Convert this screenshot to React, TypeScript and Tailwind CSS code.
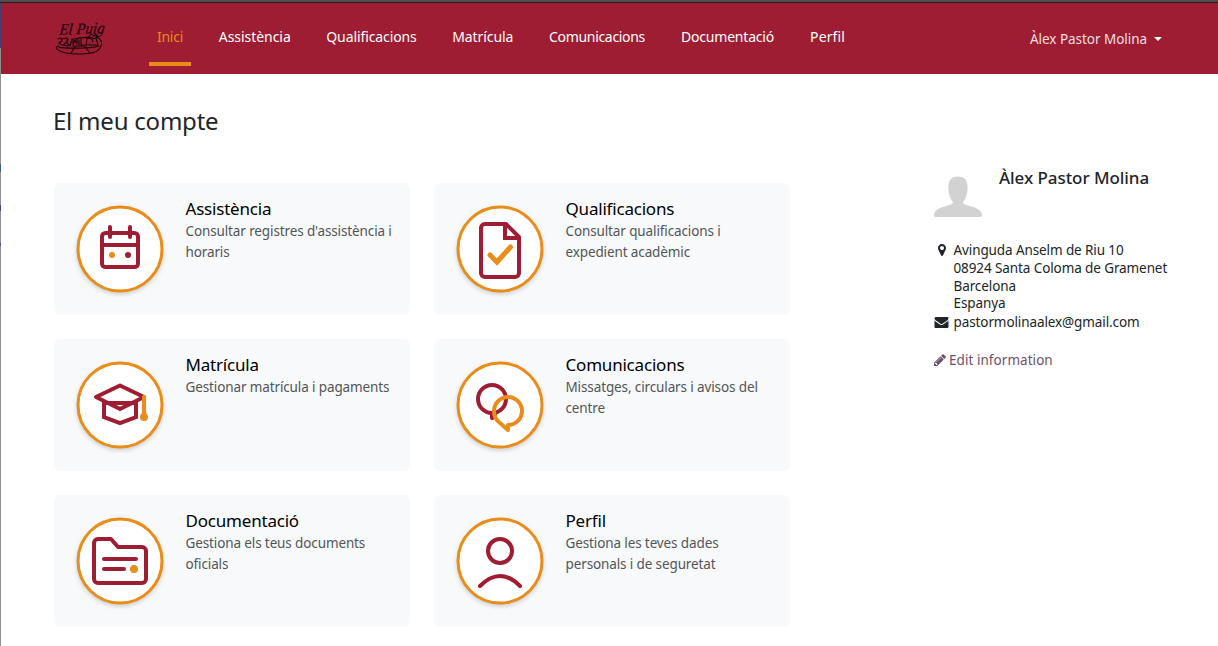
import type { ReactNode } from "react";

const RED = "#9e1d32";
const ORANGE = "#e88c1a";

const navItems = [
  { label: "Inici", cls: "w-[42px] tracking-[-0.25px]", active: true },
  { label: "Assistència", cls: "w-[87.500px] tracking-[-0.05px]" },
  { label: "Qualificacions", cls: "w-[106px] tracking-[-0.1px]" },
  { label: "Matrícula", cls: "w-[76.500px] tracking-[-0.08px]" },
  { label: "Comunicacions", cls: "w-[112px] tracking-[-0.32px]" },
  { label: "Documentació", cls: "w-[109px] tracking-[-0.2px]" },
  { label: "Perfil", cls: "w-[51px] tracking-[0.1px]" },
];

function Logo() {
  return (
    <svg
      className="h-[36px] w-[54px] overflow-visible"
      viewBox="0 0 54 36"
      fill="none"
      stroke="#1c060b"
      strokeWidth="1.1"
      strokeLinecap="round"
      strokeLinejoin="round"
    >
      <text
        x="6"
        y="14"
        textLength="45"
        lengthAdjust="spacingAndGlyphs"
        transform="skewX(-8) rotate(-2 28 14)"
        className="font-['Liberation_Serif',serif] text-[16px] italic"
        fill="#1c060b"
        stroke="#1c060b"
        strokeWidth="0.2"
      >
        El Puig
      </text>
      <path d="M19 19C27 17 33 17 38 18M41 17c6 2 7 7 4 11-4 6-14 6-22 6-7 0-15-1-20-4-3-2-2-4 1-4" />
      <path d="M4 27.500c9 .5 28 2 40-1.500M20 27l-4 6M30 27l5 6M18 26h13" />
      <path d="M3 19l3-1 1 3-3 2 3 2M7 19l5-1v4l-4 3 5 1M13 19l-1 4 3 3 2-7M18 19v6l2-5 2 4v-5M24 20v5M26 19v6h3" />
      <path d="M31 25l1-7 5 1 4-1 2 7zM33 18l3-4 3 2 2-2 1 4M37 19l1 3" />
    </svg>
  );
}

const iconPaths: Record<string, ReactNode> = {
  calendar: (
    <>
      <rect x="-18" y="-16" width="36" height="34" rx="3.500" />
      <path d="M-18-4H18M-10-22V-12M10-22V-12" />
      <circle cx="-8" cy="6" r="3" fill={ORANGE} stroke="none" />
      <circle cx="8" cy="6" r="3" fill={RED} stroke="none" />
    </>
  ),
  document: (
    <>
      <path d="M-15-25H6L19-12V24a4 4 0 0 1-4 4h-30a4 4 0 0 1-4-4V-21a4 4 0 0 1 4-4Z" />
      <path d="M5-25V-11H19" strokeLinejoin="miter" />
      <path d="M-10 6l7 7L10.500-2" stroke={ORANGE} strokeWidth="5" strokeLinejoin="miter" />
    </>
  ),
  cap: (
    <g strokeLinejoin="miter">
      <path d="M-24-8L0-19.500 24-8 0 4Z" strokeLinejoin="round" />
      <path d="M-16-2H16V12L0 18-16 12Z" />
      <path d="M24-8V12" stroke={ORANGE} />
      <circle cx="24" cy="12" r="4" fill={ORANGE} stroke="none" />
    </g>
  ),
  chat: (
    <>
      <circle cx="-8" cy="-6" r="14" />
      <path d="M-8 8V13L-5 10" />
      <path d="M8 20A14 14 0 1 0-6 6C-6 11-4 15 0 18L8 25Z" stroke={ORANGE} />
    </>
  ),
  folder: (
    <>
      <path d="M-22-22H-9L-2-14H22a4 4 0 0 1 4 4V18a4 4 0 0 1-4 4H-22a4 4 0 0 1-4-4V-18a4 4 0 0 1 4-4Z" />
      <path d="M-16-2H16M-16 8H4" />
      <circle cx="14" cy="8" r="4" fill={ORANGE} stroke="none" />
    </>
  ),
  person: (
    <>
      <circle cx="0" cy="-10" r="12" />
      <path d="M-20 25Q0 5 20 25" />
    </>
  ),
};

function CardIcon({ name }: { name: string }) {
  return (
    <svg
      className="size-[88px] shrink-0 overflow-visible"
      viewBox="-44 -44 88 88"
      fill="none"
      stroke={RED}
      strokeWidth="4"
      strokeLinecap="round"
      strokeLinejoin="round"
    >
      <circle r="42" fill="#fff" stroke={ORANGE} strokeWidth="3" className="drop-shadow-[0_2px_2px_rgba(0,0,0,0.17)]" />
      {iconPaths[name]}
    </svg>
  );
}

const cards = [
  { icon: "calendar", title: "Assistència", lines: ["Consultar registres d'assistència i", "horaris"] },
  { icon: "document", title: "Qualificacions", lines: ["Consultar qualificacions i", "expedient acadèmic"] },
  { icon: "cap", title: "Matrícula", lines: ["Gestionar matrícula i pagaments"] },
  { icon: "chat", title: "Comunicacions", lines: ["Missatges, circulars i avisos del", "centre"] },
  { icon: "folder", title: "Documentació", lines: ["Gestiona els teus documents", "oficials"] },
  { icon: "person", title: "Perfil", lines: ["Gestiona les teves dades", "personals i de seguretat"] },
];

const address = ["Avinguda Anselm de Riu 10", "08924 Santa Coloma de Gramenet", "Barcelona", "Espanya"];

export default function App() {
  return (
    <div className="flex h-[646px] w-[1218px] flex-col overflow-hidden bg-white font-['Noto_Sans','Open_Sans',sans-serif] text-[#212529]">
      <div className="h-[3px] shrink-0 border-b border-[#2b1f22] bg-[#4f4c4e]" />
      <div className="flex min-h-0 flex-1">
        <div className="flex w-px shrink-0 flex-col bg-[#8f8f8f]">
          <div className="h-[45px] bg-[#42406a]" />
          <div className="mt-[116px] h-[8px] bg-[#47606f]" />
          <div className="mt-[33px] h-[6px] bg-[#3f5068]" />
          <div className="mt-[32px] h-[3px] bg-[#4a5a78]" />
        </div>
        <div className="flex flex-1 flex-col">
          <header className="flex h-[71px] shrink-0 bg-[#9e1d32] pl-[54px] text-[14px] text-white">
            <div className="w-[94px] pt-[17px]">
              <Logo />
            </div>
            <nav className="flex gap-5">
              {navItems.map((item) => (
                <a
                  key={item.label}
                  className={`${item.cls} mt-5 flex h-[43px] justify-center border-b-4 leading-[28px] whitespace-nowrap ${
                    item.active ? "border-[#e88c1a] text-[#e88c1a]" : "border-transparent"
                  }`}
                >
                  {item.label}
                </a>
              ))}
            </nav>
            <button className="mr-[56px] ml-auto flex items-center gap-[7px] text-[13.500px] tracking-[-0.04px] text-[#f1dee1]">
              <span className="pt-[2px]">Àlex Pastor Molina</span>
              <svg className="h-1 w-2" viewBox="0 0 8 4">
                <path d="M0 0h8L4 4z" fill="#fff" />
              </svg>
            </button>
          </header>
          <main className="flex flex-1 pl-[53px]">
            <div className="w-[736px] shrink-0">
              <h1 className="mt-[29px] -ml-px text-[24px] leading-[36px] font-[450] tracking-[-0.22px]">El meu compte</h1>
              <div className="mt-[44px] grid grid-cols-2 gap-6">
                {cards.map((card) => (
                  <a key={card.title} className="flex h-[132px] rounded-[6px] bg-[#f8f9fb] pt-[22px] pl-[22px]">
                    <CardIcon name={card.icon} />
                    <div className="-mt-[8px] ml-[21.500px] whitespace-nowrap">
                      <h2 className="text-[17px] leading-[24px] tracking-[-0.2px] text-black">{card.title}</h2>
                      {card.lines.map((line) => (
                        <p key={line} className="text-[13.500px] leading-[21px] tracking-[-0.12px] text-[#525558]">
                          {line}
                        </p>
                      ))}
                    </div>
                  </a>
                ))}
              </div>
            </div>
            <aside className="ml-[144px] pt-[91px] text-[13.500px] tracking-[-0.1px] whitespace-nowrap">
              <div className="flex h-[76px]">
                <svg className="mt-[4px] size-[48px]" viewBox="0 0 48 48" fill="#d2d2d2">
                  <path d="M24 7.500c6.500 0 9.600 4 9.600 10.500 0 6.500-2 12-4.800 15.500 1 2 3.500 2.500 7 3.500 7 2 12.200 4.500 12.200 9 0 1.500-.5 2-2 2H2c-1.500 0-2-.5-2-2 0-4.500 5.200-7 12.200-9 3.500-1 6-1.500 7-3.500-2.800-3.500-4.800-9-4.800-15.500 0-6.500 3.100-10.500 9.600-10.500z" />
                </svg>
                <h3 className="ml-[17px] text-[17px] leading-[26px] font-medium tracking-[-0.06px]">Àlex Pastor Molina</h3>
              </div>
              <div className="flex">
                <div className="flex w-[19.500px] shrink-0 pt-[3px] pl-[3.500px]">
                  <svg className="h-[12px] w-[8px]" viewBox="0 128 1024 1536" fill="currentColor">
                    <path d="M768 640q0-106-75-181t-181-75-181 75-75 181 75 181 181 75 181-75 75-181zm256 0q0 109-33 179l-364 774q-16 33-47.500 52t-67.500 19-67.500-19-46.500-52l-365-774q-33-70-33-179 0-212 150-362t362-150 362 150 150 362z" />
                  </svg>
                </div>
                <div className="mt-px -mb-px">
                  {address.map((line) => (
                    <p key={line} className="leading-[17.750px]">{line}</p>
                  ))}
                </div>
              </div>
              <div className="flex h-[21px] items-center">
                <div className="w-[19.500px]">
                  <svg className="h-[11px] w-[15px]" viewBox="0 256 1792 1408" fill="currentColor">
                    <path d="M1792 710v794q0 66-47 113t-113 47h-1472q-66 0-113-47t-47-113v-794q44 49 101 87 362 246 497 345 57 42 92.500 65.500t94.500 48 110 24.500h2q51 0 110-24.500t94.500-48 92.500-65.500q170-123 498-345 57-39 100-87zm0-294q0 79-49 151t-122 123q-376 261-468 325-10 7-42.500 31t-54 38.500-52 32.500-57.500 27-50 9h-2q-23 0-50-9t-57.500-27-52-32.500-54-38.500-42.500-31q-91-64-262-182.500t-205-142.500q-62-42-117-115.500t-55-136.500q0-78 41.500-130t118.500-52h1472q65 0 112.500 47t47.500 113z" />
                  </svg>
                </div>
                <span>pastormolinaalex@gmail.com</span>
              </div>
              <a className="mt-[17px] flex h-[21px] items-center gap-[3px] text-[#71506b]">
                <svg className="-mt-px size-[12px]" viewBox="128 128 1536 1536" fill="currentColor">
                  <path d="M491 1536l91-91-235-235-91 91v107h128v128h107zm523-928q0-22-22-22-10 0-17 7l-542 542q-7 7-7 17 0 22 22 22 10 0 17-7l542-542q7-7 7-17zm-54-192l416 416-832 832h-416v-416zm683 96q0 53-37 90l-166 166-416-416 166-165q36-38 90-38 53 0 91 38l235 234q37 39 37 91z" />
                </svg>
                <span className="tracking-[0.05px]">Edit information</span>
              </a>
            </aside>
          </main>
        </div>
      </div>
    </div>
  );
}
